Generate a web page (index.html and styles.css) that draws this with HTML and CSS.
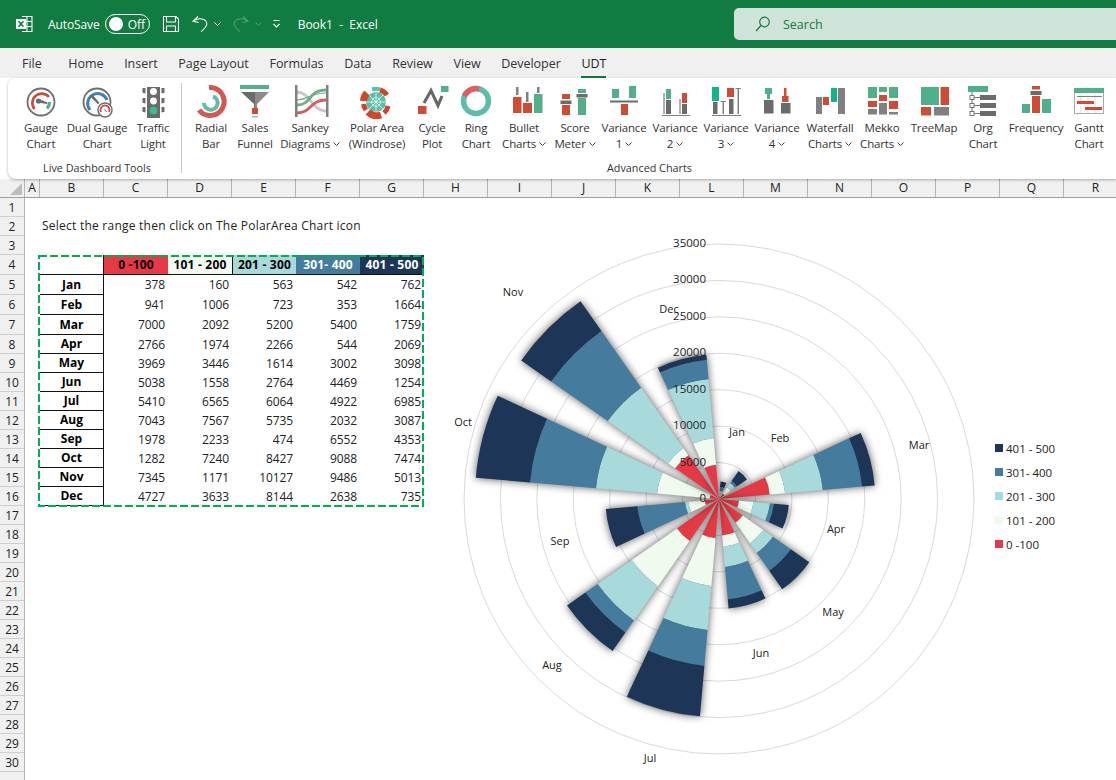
FILE: index.html
```html
<!DOCTYPE html>
<html lang="en">
<head>
<meta charset="utf-8">
<title>Book1 - Excel</title>
<link rel="stylesheet" href="styles.css">
</head>
<body>
<header class="titlebar">
  <svg class="ic-excel" width="20" height="20" viewBox="14 14 20 20"><path class="wl" d="M22 16.5h10v15H22M27 16.5v15M22 21.5h10M22 26.5h10"/><rect class="wf" x="16" y="19" width="10" height="10"/><path class="gl" d="M18.6 21.2l4.8 5.6M23.4 21.2l-4.8 5.6"/></svg>
  <span class="autosave">AutoSave</span>
  <span class="toggle"><span class="knob"></span><span class="off">Off</span></span>
  <svg class="ic-save" width="18" height="18" viewBox="162 15 18 18"><path class="wl" d="M163.5 16.5h12.5l2.5 2.5v12.5h-15zM166.5 16.5v5.5h9v-5.5M166.5 31.5v-5.5h9v5.5"/></svg>
  <svg class="ic-undo" width="18" height="18" viewBox="191 15 18 18"><path class="wl" d="M198 16.5l-5 4.6 5.5 1.4M193.2 21c8-4.600 14-1 13.500 3.500-.3 3-3 4.500-5.500 7"/></svg>
  <svg class="chev white c1" viewBox="0 0 7 4"><path d="M.5.5l3 3 3-3"/></svg>
  <svg class="ic-redo" width="18" height="18" viewBox="231 15 18 18"><path class="dl" d="M242 16.500l5 4.600-5.500 1.400M246.800 21c-8-4.600-14-1-13.500 3.500.3 3 3 4.500 5.500 7"/></svg>
  <svg class="chev dim c2" viewBox="0 0 7 4"><path d="M.5.5l3 3 3-3"/></svg>
  <svg class="ic-cust" width="10" height="10" viewBox="271 19 10 10"><path class="wl" d="M272.500 20.500h6M272.500 24l3 3 3-3"/></svg>
  <span class="doc">Book1&nbsp; -&nbsp; Excel</span>
  <div class="search">
    <svg width="18" height="18" viewBox="0 0 18 18"><circle class="sl" cx="10.500" cy="7" r="4.800"/><path class="sl" d="M7 10.500L2 16"/></svg>
    <span>Search</span>
  </div>
</header>

<nav class="tabs">
  <span class="tab first">File</span><span class="tab">Home</span><span class="tab">Insert</span><span class="tab">Page Layout</span><span class="tab">Formulas</span><span class="tab">Data</span><span class="tab">Review</span><span class="tab">View</span><span class="tab">Developer</span><span class="tab active">UDT</span>
</nav>

<section class="ribbon">
  <div class="group g1">
    <div class="tools t1">
      <div class="tool">
        <svg width="50" height="36" viewBox="16 84 50 36"><circle class="o-gray" cx="41" cy="102" r="13.500"/><path class="a-red" d="M34.500 109A9.200 9.200 0 1 1 49 97"/><path class="a-green" d="M49.500 102a9.200 9.200 0 0 1-2.500 6.500"/><path class="f-gray" d="M38.500 99l9 3.500-.5 1.500-9.500-1.500z"/><circle class="f-gray" cx="38.500" cy="101" r="2.600"/></svg>
        <span>Gauge<br>Chart</span>
      </div>
      <div class="tool">
        <svg width="62" height="36" viewBox="66 84 62 36"><circle class="o-gray" cx="97" cy="102" r="13.500"/><path class="a-blue" d="M90 110A10 10 0 1 1 107 100"/><path class="f-gray" d="M92 94l7.500 9-1.500 1.200-8-8z"/><circle class="f-white o-gray" cx="105" cy="110" r="7"/><path class="a-red thin" d="M101 112a4.500 4.500 0 1 1 8 0"/><path class="f-gray" d="M103 108l4 3.500-1 .7z"/></svg>
        <span>Dual Gauge<br>Chart</span>
      </div>
      <div class="tool">
        <svg width="50" height="36" viewBox="128 84 50 36"><path class="f-gray" d="M147 87h13v31h-13zM142.500 88h3v5.500l-3-.8zM161.500 88h3v4.700l-3 .8zM142.500 98h3v5.500l-3-.8zM161.500 98h3v4.700l-3 .8zM142.500 107h3v5.500l-3-.8zM161.500 107h3v4.700l-3 .8z"/><circle class="f-white" cx="153.500" cy="91.500" r="3.400"/><circle class="f-white" cx="153.500" cy="101" r="3.400"/><circle class="f-mint" cx="153.500" cy="110.500" r="3.800"/></svg>
        <span>Traffic<br>Light</span>
      </div>
    </div>
    <div class="glabel">Live Dashboard Tools</div>
  </div>
  <div class="sep"></div>
  <div class="group g2">
    <div class="tools t2">
      <div class="tool">
        <svg width="50" height="36" viewBox="186 84 50 36"><path class="n-red" d="M209 87.500A14 14 0 1 1 199 110"/><path class="n-teal" d="M213 96.500A6.800 6.800 0 1 1 204 103"/></svg>
        <span>Radial<br>Bar</span>
      </div>
      <div class="tool">
        <svg width="38" height="36" viewBox="236 84 38 36"><rect class="f-green" x="240" y="85" width="29" height="4"/><path class="f-gray" d="M241 92h14v21h-1v-9z"/><path class="f-gray2" d="M255 92h14l-12 12v9h-2z"/><rect class="f-red" x="252" y="108" width="6" height="6"/><rect class="f-lg" x="252" y="116" width="6" height="1.500"/></svg>
        <span>Sales<br>Funnel</span>
      </div>
      <div class="tool">
        <svg width="72" height="36" viewBox="274 84 72 36"><path class="n-lg" d="M297 92C310 92 312 111 326 111"/><path class="n-green" d="M297 105C312 105 308 90 326 90"/><path class="n-green th" d="M297 100C310 99 310 93 326 93"/><path class="n-rd" d="M297 113C312 113 309 100 326 100"/><rect class="f-g3" x="295" y="85" width="2.500" height="32"/><rect class="f-g3" x="326" y="85" width="2.500" height="32"/></svg>
        <span>Sankey<br>Diagrams <svg class="chev" viewBox="0 0 7 4"><path d="M.5.5l3 3 3-3"/></svg></span>
      </div>
      <div class="tool">
        <svg width="62" height="36" viewBox="346 84 62 36"><circle class="f-teal" cx="376" cy="102" r="10"/><path class="spoke" d="M376 92v20M366 102h20M369 95l14 14M383 95l-14 14"/><circle class="spoke" cx="376" cy="102" r="4.500"/><path class="pa-r" d="M380 90A13 13 0 0 1 387 95"/><path class="pa-t" d="M372 89.500A13 13 0 0 1 380 89.500"/><path class="pa-r w" d="M367 93A13 13 0 0 0 363.500 101"/><path class="pa-r" d="M363.500 104A13 13 0 0 0 366 110"/><path class="pa-r w" d="M368 112A13 13 0 0 0 381 115"/><path class="pa-r" d="M384 113A13 13 0 0 0 388 106"/></svg>
        <span>Polar Area<br>(Windrose)</span>
      </div>
      <div class="tool">
        <svg width="48" height="36" viewBox="408 84 48 36"><rect class="f-red" x="418" y="106" width="8.500" height="8"/><path class="n-g4" d="M424 103L431 90.500L438 105.500L442 96"/><rect class="f-green" x="441" y="86" width="7.500" height="6"/></svg>
        <span>Cycle<br>Plot</span>
      </div>
      <div class="tool">
        <svg width="40" height="36" viewBox="456 84 40 36"><circle class="ring" cx="476" cy="101" r="12.500"/><path class="ring-r" d="M464.500 96A12.500 12.500 0 0 1 479 89"/></svg>
        <span>Ring<br>Chart</span>
      </div>
      <div class="tool">
        <svg width="56" height="36" viewBox="496 84 56 36"><rect class="f-g3" x="516" y="87" width="2.500" height="8"/><rect class="f-g3" x="526" y="92" width="2.500" height="10"/><rect class="f-g3" x="537" y="87" width="2.500" height="6"/><rect class="f-red" x="513" y="97" width="8.500" height="16"/><rect class="f-red" x="523" y="103" width="9" height="10"/><rect class="f-green" x="534" y="94" width="8.500" height="19"/></svg>
        <span>Bullet<br>Charts <svg class="chev" viewBox="0 0 7 4"><path d="M.5.500l3 3 3-3"/></svg></span>
      </div>
      <div class="tool">
        <svg width="46" height="36" viewBox="552 84 46 36"><rect class="f-red" x="562" y="94" width="8" height="21"/><rect class="f-white" x="562" y="99" width="8" height="6"/><rect class="f-g4" x="560.500" y="100.500" width="11" height="3.500"/><rect class="f-green" x="578" y="89" width="8" height="26"/><rect class="f-white" x="578" y="93" width="8" height="5"/><rect class="f-g4" x="576.500" y="94" width="11" height="3.500"/></svg>
        <span>Score<br>Meter <svg class="chev" viewBox="0 0 7 4"><path d="M.5.500l3 3 3-3"/></svg></span>
      </div>
      <div class="tool">
        <svg width="52" height="36" viewBox="598 84 52 36"><rect class="f-green" x="612" y="89" width="7" height="9"/><rect class="f-green" x="629" y="86" width="7" height="12"/><rect class="f-g4" x="610" y="100.500" width="28" height="2"/><rect class="f-red" x="621" y="104" width="7" height="11"/></svg>
        <span>Variance<br>1 <svg class="chev" viewBox="0 0 7 4"><path d="M.5.500l3 3 3-3"/></svg></span>
      </div>
      <div class="tool">
        <svg width="50" height="36" viewBox="650 84 50 36"><rect class="f-lg" x="663" y="93" width="2" height="21"/><rect class="f-g4" x="666" y="100" width="5" height="14"/><rect class="f-green" x="666" y="89" width="5" height="10"/><rect class="f-lg" x="679" y="99" width="2" height="15"/><rect class="f-g4" x="682" y="104" width="5" height="10"/><rect class="f-red" x="682" y="93" width="5" height="10"/><rect class="f-g3" x="662" y="115" width="28" height="1"/></svg>
        <span>Variance<br>2 <svg class="chev" viewBox="0 0 7 4"><path d="M.5.500l3 3 3-3"/></svg></span>
      </div>
      <div class="tool">
        <svg width="52" height="36" viewBox="700 84 52 36"><rect class="f-emer" x="712" y="87" width="7" height="14"/><rect class="f-g4" x="713" y="102" width="4.500" height="12"/><rect class="f-g3" x="722.500" y="102" width="1.500" height="12"/><rect class="f-g3" x="720.500" y="101" width="5.500" height="1"/><rect class="f-red" x="727" y="88" width="7" height="9"/><rect class="f-g4" x="729" y="99" width="4.500" height="15"/><rect class="f-g3" x="737.500" y="88" width="1.500" height="26"/><rect class="f-g3" x="735.500" y="88" width="5.500" height="1"/><rect class="f-g3" x="712" y="115" width="29" height="1"/></svg>
        <span>Variance<br>3 <svg class="chev" viewBox="0 0 7 4"><path d="M.5.500l3 3 3-3"/></svg></span>
      </div>
      <div class="tool">
        <svg width="50" height="36" viewBox="752 84 50 36"><rect class="f-green" x="765" y="88" width="7" height="6"/><rect class="f-green" x="767" y="94" width="3" height="5"/><rect class="f-g4" x="764" y="100" width="9.500" height="13.500"/><rect class="f-red" x="784" y="88" width="2.500" height="8"/><rect class="f-red" x="782" y="96" width="6.500" height="6"/><rect class="f-g4" x="781" y="103" width="9.500" height="10.500"/></svg>
        <span>Variance<br>4 <svg class="chev" viewBox="0 0 7 4"><path d="M.5.500l3 3 3-3"/></svg></span>
      </div>
      <div class="tool">
        <svg width="56" height="36" viewBox="802 84 56 36"><rect class="f-g3" x="816" y="97" width="6" height="17"/><rect class="f-red" x="823" y="97" width="6" height="8"/><rect class="f-emer" x="831" y="88" width="6" height="14"/><rect class="f-g3" x="838" y="88" width="7" height="26"/></svg>
        <span>Waterfall<br>Charts <svg class="chev" viewBox="0 0 7 4"><path d="M.5.500l3 3 3-3"/></svg></span>
      </div>
      <div class="tool">
        <svg width="48" height="36" viewBox="858 84 48 36"><rect class="f-green" x="868" y="87" width="9" height="11"/><rect class="f-red" x="868" y="101" width="9" height="6"/><rect class="f-g3" x="868" y="109" width="9" height="5.500"/><rect class="f-green" x="879" y="87" width="8" height="5"/><rect class="f-red" x="879" y="95" width="8" height="6"/><rect class="f-g3" x="879" y="103" width="8" height="11.500"/><rect class="f-green" x="889" y="87" width="9" height="11"/><rect class="f-red" x="889" y="101" width="9" height="8"/><rect class="f-g3" x="889" y="112" width="9" height="2.500"/></svg>
        <span>Mekko<br>Charts <svg class="chev" viewBox="0 0 7 4"><path d="M.5.500l3 3 3-3"/></svg></span>
      </div>
      <div class="tool">
        <svg width="56" height="36" viewBox="906 84 56 36"><rect class="f-green" x="921" y="87" width="18" height="18"/><rect class="f-red" x="940.500" y="87" width="8.500" height="18"/><rect class="f-red" x="921" y="107" width="10" height="8.500"/><rect class="f-g3" x="934" y="107" width="15" height="8.500"/></svg>
        <span>TreeMap</span>
      </div>
      <div class="tool">
        <svg width="42" height="36" viewBox="962 84 42 36"><rect class="f-green" x="968" y="86" width="20" height="6"/><path class="orgl" d="M972 92v21M974 97.500h6M974 105.500h6M974 113.500h6"/><rect class="orgb" x="970" y="95.500" width="4" height="4"/><rect class="orgb" x="970" y="103.500" width="4" height="4"/><rect class="orgb" x="970" y="111.500" width="4" height="4"/><rect class="f-g4" x="980" y="95" width="16" height="5"/><rect class="f-g4" x="980" y="103" width="16" height="5"/><rect class="f-g4" x="980" y="111" width="16" height="5"/></svg>
        <span>Org<br>Chart</span>
      </div>
      <div class="tool">
        <svg width="64" height="36" viewBox="1004 84 64 36"><rect class="f-green" x="1022" y="104" width="8" height="9"/><rect class="f-red" x="1032" y="96" width="8" height="17"/><rect class="f-g4" x="1030.500" y="91" width="11" height="4"/><rect class="f-red" x="1032" y="86" width="8" height="3.500"/><rect class="f-green" x="1042" y="99" width="9" height="14"/></svg>
        <span>Frequency</span>
      </div>
      <div class="tool">
        <svg width="42" height="36" viewBox="1068 84 42 36"><rect class="gantt" x="1074.500" y="88.500" width="29" height="25"/><path class="gantt-t" d="M1081 93v20M1088 93v20M1095 93v20"/><rect class="f-green" x="1074" y="88" width="30" height="5"/><rect class="f-g3" x="1077" y="96" width="25" height="1"/><rect class="f-red" x="1077" y="101" width="17" height="3"/><rect class="f-red" x="1085" y="107" width="17" height="3"/></svg>
        <span>Gantt<br>Chart</span>
      </div>
    </div>
    <div class="glabel">Advanced Charts</div>
  </div>
</section>

<div class="colheads">
  <div class="corner"><svg width="14" height="14" viewBox="0 0 14 14"><path class="tri" d="M13 1v12H1z"/></svg></div>
  <span class="col a">A</span><span class="col">B</span><span class="col">C</span><span class="col">D</span><span class="col">E</span><span class="col">F</span><span class="col">G</span><span class="col">H</span><span class="col">I</span><span class="col">J</span><span class="col">K</span><span class="col">L</span><span class="col">M</span><span class="col">N</span><span class="col">O</span><span class="col">P</span><span class="col">Q</span><span class="col">R</span>
</div>

<main class="sheet">
  <div class="rowheads">
    <span class="rh">1</span><span class="rh">2</span><span class="rh">3</span><span class="rh tall">4</span><span class="rh tall">5</span><span class="rh tall">6</span><span class="rh tall">7</span><span class="rh">8</span><span class="rh">9</span><span class="rh">10</span><span class="rh">11</span><span class="rh">12</span><span class="rh">13</span><span class="rh">14</span><span class="rh">15</span><span class="rh">16</span><span class="rh">17</span><span class="rh">18</span><span class="rh">19</span><span class="rh">20</span><span class="rh">21</span><span class="rh">22</span><span class="rh">23</span><span class="rh">24</span><span class="rh">25</span><span class="rh">26</span><span class="rh">27</span><span class="rh">28</span><span class="rh">29</span><span class="rh">30</span><span class="rh"></span>
  </div>
  <div class="cells">
    <p class="note">Select the range then click on The PolarArea Chart icon</p>
    <table class="data">
      <tr class="tall"><th class="blank"></th><th class="h1">0 -100</th><th class="h2">101 - 200</th><th class="h3">201 - 300</th><th class="h4">301- 400</th><th class="h5">401 - 500</th></tr>
      <tr class="tall"><th class="m">Jan</th><td>378</td><td>160</td><td>563</td><td>542</td><td>762</td></tr>
      <tr class="tall"><th class="m">Feb</th><td>941</td><td>1006</td><td>723</td><td>353</td><td>1664</td></tr>
      <tr class="tall"><th class="m">Mar</th><td>7000</td><td>2092</td><td>5200</td><td>5400</td><td>1759</td></tr>
      <tr><th class="m">Apr</th><td>2766</td><td>1974</td><td>2266</td><td>544</td><td>2069</td></tr>
      <tr><th class="m">May</th><td>3969</td><td>3446</td><td>1614</td><td>3002</td><td>3098</td></tr>
      <tr><th class="m">Jun</th><td>5038</td><td>1558</td><td>2764</td><td>4469</td><td>1254</td></tr>
      <tr><th class="m">Jul</th><td>5410</td><td>6565</td><td>6064</td><td>4922</td><td>6985</td></tr>
      <tr><th class="m">Aug</th><td>7043</td><td>7567</td><td>5735</td><td>2032</td><td>3087</td></tr>
      <tr><th class="m">Sep</th><td>1978</td><td>2233</td><td>474</td><td>6552</td><td>4353</td></tr>
      <tr><th class="m">Oct</th><td>1282</td><td>7240</td><td>8427</td><td>9088</td><td>7474</td></tr>
      <tr><th class="m">Nov</th><td>7345</td><td>1171</td><td>10127</td><td>9486</td><td>5013</td></tr>
      <tr><th class="m">Dec</th><td>4727</td><td>3633</td><td>8144</td><td>2638</td><td>735</td></tr>
    </table>
  </div>
  <svg class="ants" width="388" height="254" viewBox="38 254 388 254"><rect class="ant" x="39" y="255" width="384" height="250"/></svg>
  <svg id="chart" class="chart" width="1116" height="583" viewBox="0 197 1116 583"></svg>
  <ul class="legend">
    <li><i class="s5"></i>401 - 500</li>
    <li><i class="s4"></i>301- 400</li>
    <li><i class="s3"></i>201 - 300</li>
    <li><i class="s2"></i>101 - 200</li>
    <li><i class="s1"></i>0 -100</li>
  </ul>
</main>
<script src="chart.js"></script>
</body>
</html>
```
FILE: styles.css
```css
* { box-sizing: border-box; }
html, body { margin: 0; height: 780px; overflow: hidden; background: #fff; }
body { width: 1116px; font-family: "Open Sans", "Noto Sans", sans-serif; font-size: 12px; color: #222; }

.titlebar { height: 48px; background: #107c41; color: #fff; display: flex; align-items: center; position: relative; padding-left: 14px; }
.wl { fill: none; stroke: #fff; stroke-width: 1.100; }
.wf { fill: #fff; }
.gl { fill: none; stroke: #107c41; stroke-width: 1.600; }
.dl { fill: none; stroke: #4f9f77; stroke-width: 1.100; }
.autosave { margin-left: 14px; font-size: 12px; letter-spacing: -.1px; }
.toggle { margin-left: 5px; width: 45px; height: 20px; border: 1px solid #fff; border-radius: 10px; display: flex; align-items: center; padding-left: 3px; gap: 5px; }
.knob { width: 14px; height: 14px; border-radius: 50%; background: #fff; }
.off { font-size: 12px; }
.ic-save { margin-left: 12px; }
.ic-undo { margin-left: 11px; }
.chev { width: 7px; height: 4px; fill: none; stroke: #444; stroke-width: 1; vertical-align: 2px; }
.chev.white { stroke: #fff; }
.chev.dim { stroke: #4f9f77; }
.c1 { margin-left: 5px; }
.ic-redo { margin-left: 11px; }
.c2 { margin-left: 5px; }
.ic-cust { margin-left: 10px; }
.doc { margin-left: 16px; font-size: 12px; }
.search { position: absolute; left: 734px; right: 0; top: 8px; height: 32px; background: #cfe3d8; border-radius: 5px 0 0 5px; display: flex; align-items: center; padding-left: 20px; gap: 11px; color: #107c41; font-size: 12.500px; }
.sl { fill: none; stroke: #107c41; stroke-width: 1.200; }

.tabs { height: 30px; background: #f0f0f0; display: flex; align-items: center; padding: 0 0 0 22px; gap: 20.700px; color: #333; }
.tab { font-size: 12.500px; line-height: 24px; height: 26px; margin-top: 3px; letter-spacing: -.04px; }
.tab.first { margin-right: 6px; }
.tab.active { border-bottom: 2px solid #107c41; color: #222; }

.ribbon { margin-left: 8px; height: 101px; background: #fff; border-radius: 8px 0 0 8px; box-shadow: 0 1px 3px rgba(0,0,0,.3); display: flex; padding: 6px 0 0 8px; position: relative; }
.group { display: flex; flex-direction: column; }
.g1 { width: 162px; }
.sep { flex: none; width: 1px; height: 90px; margin: -1px 4px 0 3px; background: #c8c8c8; }
.tools { display: grid; }
.t1 { grid-template-columns: 50px 62px 50px; }
.t2 { grid-template-columns: 50px 38px 72px 62px 48px 40px 56px 46px 52px 50px 52px 50px 56px 48px 56px 42px 64px 42px; }
.tool { display: flex; flex-direction: column; align-items: center; text-align: center; font-size: 11.500px; line-height: 16px; color: #333; white-space: nowrap; letter-spacing: -.15px; }
.tool > svg { display: block; flex: none; }
.glabel { margin-top: auto; margin-bottom: 4px; text-align: center; font-size: 10.800px; line-height: 14px; color: #333; }
.g2 .glabel { padding-left: 3px; }

.o-gray { fill: none; stroke: #6e6e6e; stroke-width: 1.800; }
.f-white.o-gray { fill: #fff; stroke-width: 1.500; }
.a-red { fill: none; stroke: #cf4b33; stroke-width: 2.600; }
.a-red.thin { stroke-width: 1.800; }
.a-green { fill: none; stroke: #4fb08a; stroke-width: 3.200; }
.a-blue { fill: none; stroke: #3f7fbf; stroke-width: 3; }
.f-gray { fill: #6b6b6b; }
.f-gray2 { fill: #8a8a8a; }
.f-white { fill: #fff; }
.f-mint { fill: #35c08e; }
.f-green { fill: #4fb08a; }
.f-emer { fill: #0fb48a; }
.f-red { fill: #cf4b33; }
.f-lg { fill: #b0b0b0; }
.f-g3 { fill: #808080; }
.f-g4 { fill: #6b6b6b; }
.f-teal { fill: #5cbdaa; }
.n-red { fill: none; stroke: #d5574f; stroke-width: 5; }
.n-teal { fill: none; stroke: #5cbdaa; stroke-width: 4; }
.n-lg { fill: none; stroke: #c9c9c9; stroke-width: 3; }
.n-green { fill: none; stroke: #6fae8a; stroke-width: 2.800; }
.n-green.th { stroke-width: 1.200; }
.n-rd { fill: none; stroke: #d0605a; stroke-width: 2.800; }
.n-g4 { fill: none; stroke: #666; stroke-width: 3; }
.spoke { fill: none; stroke: #e6f6f2; stroke-width: .8; }
.pa-r { fill: none; stroke: #d2452c; stroke-width: 5; }
.pa-r.w { stroke-width: 7; }
.pa-t { fill: none; stroke: #5cbdaa; stroke-width: 4; }
.ring { fill: none; stroke: #5cbdaa; stroke-width: 5.500; }
.ring-r { fill: none; stroke: #e85a62; stroke-width: 5.500; }
.orgl { fill: none; stroke: #777; stroke-width: 1; }
.orgb { fill: #fff; stroke: #777; stroke-width: 1; }
.gantt { fill: #fff; stroke: #aaa; stroke-width: 1; }
.gantt-t { fill: none; stroke: #ddd; stroke-width: 1; }
.tri { fill: #bdbdbd; }

.colheads { height: 19px; background: #f0f0f0; border-bottom: 1px solid #9e9e9e; display: flex; overflow: hidden; }
.corner { flex: none; width: 25px; border-right: 1px solid #b5b5b5; display: flex; align-items: flex-end; justify-content: flex-end; padding: 0 1px 1px 0; }
.col { flex: none; width: 64px; text-align: center; line-height: 18px; font-size: 12px; color: #222; border-right: 1px solid #b5b5b5; }
.col.a { width: 15px; }

.sheet { position: relative; height: 583px; display: flex; overflow: hidden; }
.rowheads { flex: none; width: 25px; background: #f0f0f0; border-right: 1px solid #b5b5b5; display: flex; flex-direction: column; }
.rh { flex: none; height: 19px; line-height: 19px; text-align: center; font-size: 12px; color: #222; border-bottom: 1px solid #cfcfcf; }
.rh.tall { height: 20px; }
.cells { flex: 1; padding-left: 15px; }
.note { margin: 18px 0 20px 2px; height: 19px; line-height: 19px; font-size: 12px; letter-spacing: .24px; color: #222; white-space: nowrap; }
.data { border-collapse: separate; border-spacing: 0; table-layout: fixed; width: 384px; font-size: 12px; }
.data tr { height: 19px; }
.data tr.tall { height: 20px; }
.data th, .data td { width: 64px; padding: 0; line-height: 16px; }
.data td { text-align: right; padding-right: 3px; color: #222; letter-spacing: -.1px; }
.data th { font-weight: 700; color: #000; text-align: center; border-bottom: 1px solid #111; letter-spacing: .2px; }
.data th.m { border-right: 1px solid #111; letter-spacing: 0; }
.data th.blank { border-right: 1px solid #111; }
.h1 { background: #e63946; }
.h2 { background: #f1faee; }
.h3 { background: #a8dadc; border-left: 1px solid #111; }
.data .h4 { background: #457b9d; color: #fff; }
.data .h5 { background: #1d3557; color: #fff; }

.ants { position: absolute; left: 38px; top: 57px; }
.ant { fill: none; stroke: #00b050; stroke-width: 2; stroke-dasharray: 8 3; }
.chart { position: absolute; left: 0; top: 0; }
.ringline { fill: none; stroke: #d9d9d9; stroke-width: 1; }
.bar { filter: drop-shadow(0 0 4px rgba(0,0,0,.65)); }
.axis { font-size: 11.500px; fill: #222; text-anchor: end; }
.month { font-size: 11px; fill: #222; text-anchor: middle; }

.legend { position: absolute; left: 995px; top: 242px; margin: 0; padding: 0; list-style: none; display: flex; flex-direction: column; gap: 8px; font-size: 11.500px; color: #222; }
.legend li { display: flex; align-items: center; height: 16px; gap: 3px; }
.legend i { width: 8px; height: 8px; }
.s1 { background: #e63946; }
.s2 { background: #f1faee; }
.s3 { background: #a8dadc; }
.s4 { background: #457b9d; }
.s5 { background: #1d3557; }
```
FILE: chart.js
```js
var CX = 719, CY = 498, SCALE = 255 / 35000;
var NS = 'http://www.w3.org/2000/svg';
var COLORS = ['#e63946', '#f1faee', '#a8dadc', '#457b9d', '#1d3557'];
var DATA = [
  [378, 160, 563, 542, 762], [941, 1006, 723, 353, 1664], [7000, 2092, 5200, 5400, 1759],
  [2766, 1974, 2266, 544, 2069], [3969, 3446, 1614, 3002, 3098], [5038, 1558, 2764, 4469, 1254],
  [5410, 6565, 6064, 4922, 6985], [7043, 7567, 5735, 2032, 3087], [1978, 2233, 474, 6552, 4353],
  [1282, 7240, 8427, 9088, 7474], [7345, 1171, 10127, 9486, 5013], [4727, 3633, 8144, 2638, 735]
];
var MONTHS = [
  ['Jan', 737, 435], ['Feb', 780, 441], ['Mar', 919, 448], ['Apr', 836, 532], ['May', 833, 615], ['Jun', 761, 656],
  ['Jul', 650, 761], ['Aug', 552, 668], ['Sep', 560, 544], ['Oct', 463, 425], ['Nov', 513, 295], ['Dec', 669, 312]
];
var svg = document.getElementById('chart');

function el(name, attrs, parent, text) {
  var n = document.createElementNS(NS, name);
  for (var k in attrs) n.setAttribute(k, attrs[k]);
  if (text !== undefined) n.textContent = text;
  parent.appendChild(n);
  return n;
}
function pt(r, deg) {
  var a = deg * Math.PI / 180;
  return (CX + r * Math.sin(a)).toFixed(2) + ' ' + (CY - r * Math.cos(a)).toFixed(2);
}
function sector(r0, r1, a0, a1) {
  return 'M' + pt(r0, a0) + 'A' + r0 + ' ' + r0 + ' 0 0 1 ' + pt(r0, a1) +
    'L' + pt(r1, a1) + 'A' + r1 + ' ' + r1 + ' 0 0 0 ' + pt(r1, a0) + 'Z';
}

for (var v = 5000; v <= 35000; v += 5000) {
  el('circle', { 'class': 'ringline', cx: CX, cy: CY, r: v * SCALE }, svg);
}
DATA.forEach(function (row, i) {
  var g = el('g', { 'class': 'bar' }, svg);
  var sum = 0;
  row.forEach(function (val, j) {
    var r0 = sum * SCALE;
    sum += val;
    el('path', { d: sector(r0, sum * SCALE, i * 30 + 5, i * 30 + 25), fill: COLORS[j] }, g);
  });
});
for (var t = 0; t <= 35000; t += 5000) {
  el('text', { 'class': 'axis', x: 706, y: CY - t * SCALE + 3 }, svg, String(t));
}
MONTHS.forEach(function (m) {
  el('text', { 'class': 'month', x: m[1], y: m[2] }, svg, m[0]);
});
```
